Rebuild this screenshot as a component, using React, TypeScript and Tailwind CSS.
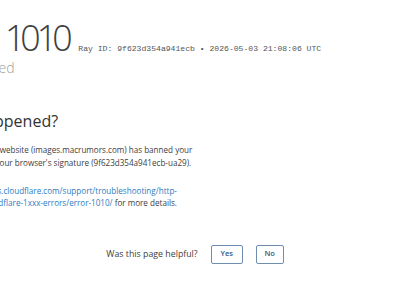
export default function App() {
  return (
    <div className="w-[400px] h-[281px] overflow-hidden bg-white font-['Open_Sans',sans-serif] text-[#404040]">
      <header className="pt-[20px] whitespace-nowrap">
        <h1 className="-ml-[85px] text-[36px] leading-[36px] font-light text-[#404040] proportional-nums">
          <span>Error</span> <span className="tracking-[-1.5px]">1010</span>
          <small className="ml-[7px] font-['Liberation_Mono',monospace] text-[8.1px] leading-none font-normal text-[#555555]">
            Ray ID: 9f623d354a941ecb • 2026-05-03 21:08:06 UTC
          </small>
        </h1>
        <h2 className="-ml-[75px] mt-[5px] text-[14px] leading-[14px] font-light text-[#a0a0a0]">Access denied</h2>
      </header>
      <section className="whitespace-nowrap">
        <h2 className="-ml-[68px] mt-[38px] text-[16px] leading-[16px] text-[#333333]">What happened?</h2>
        <p className="-ml-[68px] mt-[15px] text-[8.1px] leading-[12.5px]">
          The owner of this website (images.macrumors.com) has banned your
          <br />
          access based on your browser's signature (9f623d354a941ecb-ua29).
        </p>
        <p className="-ml-[68px] mt-[3px] text-[8.1px] leading-[12.5px]">
          Please see
          <br />
          <a className="text-[#2f7bbf]" href="#">
            https://developers.cloudflare.com/support/troubleshooting/http-
            <br />
            status-codes/cloudflare-1xxx-errors/error-1010/
          </a>{" "}
          for more details.
        </p>
      </section>
      <footer className="mt-[35px] flex items-center justify-center gap-[13px] pr-[10px]">
        <span className="text-[8.8px] leading-none text-[#404040]">Was this page helpful?</span>
        <button className="w-[32px] h-[19px] flex items-center justify-center rounded-[2px] border border-[#6f8db0] text-[7.5px] font-semibold text-[#2f5a87]">
          Yes
        </button>
        <button className="w-[28px] h-[19px] flex items-center justify-center rounded-[2px] border border-[#6f8db0] text-[7.5px] font-semibold text-[#2f5a87]">
          No
        </button>
      </footer>
    </div>
  );
}
